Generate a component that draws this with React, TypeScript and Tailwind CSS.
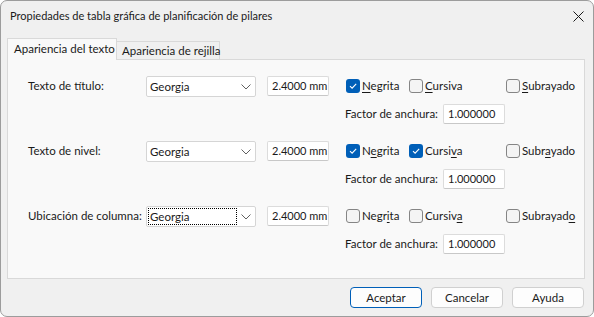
import React from "react"

type Mn = { text: string; u: number }

function Mnemonic({ text, u }: Mn) {
  return (
    <span className="whitespace-nowrap">
      {text.slice(0, u)}
      <span className="underline underline-offset-[2px]">{text.charAt(u)}</span>
      {text.slice(u + 1)}
    </span>
  )
}

function Check({ checked, label }: { checked: boolean; label: Mn }) {
  return (
    <div className="flex items-center gap-[2px]">
      {checked ? (
        <div className="w-[14px] h-[14px] rounded-[3px] bg-[#005fb8] flex items-center justify-center">
          <svg width="10" height="10" viewBox="0 0 10 10">
            <path d="M2 5.2 L4.1 7.2 L8.2 2.8" fill="none" stroke="white" strokeWidth="1.1" />
          </svg>
        </div>
      ) : (
        <div className="w-[14px] h-[14px] rounded-[3px] border border-[#858585] bg-[#f4f4f4]" />
      )}
      <Mnemonic {...label} />
    </div>
  )
}

function Combo({ focused }: { focused?: boolean }) {
  return (
    <div className="w-[110px] h-[21px] bg-white border border-[#d5d5d5] rounded-[2px] flex items-center pl-[1px] pr-[4px] justify-between">
      <div className={`h-[17px] w-[89px] flex items-center pl-[1px] ${focused ? "border border-dotted border-black" : "border border-transparent"}`}>
        Georgia
      </div>
      <svg width="10" height="6" viewBox="0 0 10 6">
        <path d="M0.5 0.5 L5 5 L9.5 0.5" fill="none" stroke="#606060" strokeWidth="1" />
      </svg>
    </div>
  )
}

function Field({ value, w }: { value: string; w: string }) {
  return (
    <div className={`${w} h-[20px] bg-white border border-[#dcdcdc] border-b-[#c8c8c8] rounded-[2px] flex items-center pl-[4px] whitespace-nowrap text-[11px]`}>
      {value}
    </div>
  )
}

const rows = [
  { label: "Texto de título:", n: true, c: false, marks: [0, 0, 0] },
  { label: "Texto de nivel:", n: true, c: true, marks: [1, 5, 4] },
  { label: "Ubicación de columna:", n: false, c: false, marks: [4, 6, 8] },
]

function Row({ r, idx }: { r: (typeof rows)[number]; idx: number }) {
  return (
    <div className="flex flex-col">
      <div className="flex items-start h-[21px]">
        <div className="w-[118px] pt-[1px] whitespace-nowrap">{r.label}</div>
        <Combo focused={idx === 2} />
        <div className="w-[11px]" />
        <Field value="2.4000 mm" w="w-[62px]" />
        <div className="w-[17px]" />
        <div className="flex items-center h-[20px] w-[160px]">
          <div className="w-[63px]">
            <Check checked={r.n} label={{ text: "Negrita", u: r.marks[0] }} />
          </div>
          <Check checked={r.c} label={{ text: "Cursiva", u: r.marks[1] }} />
        </div>
        <div className="flex items-center h-[20px]">
          <Check checked={false} label={{ text: "Subrayado", u: r.marks[2] }} />
        </div>
      </div>
      <div className="flex items-center h-[20px] mt-[7px] pl-[317px]">
        <div className="w-[98px] whitespace-nowrap">Factor de anchura:</div>
        <Field value="1.000000" w="w-[62px]" />
      </div>
    </div>
  )
}

function Button({ label, primary }: { label: string; primary?: boolean }) {
  return (
    <div
      className={`w-[72px] h-[21px] rounded-[4px] bg-[#fdfdfd] flex items-center justify-center border ${
        primary ? "border-[#005fb8]" : "border-[#d0d0d0]"
      }`}
    >
      {label}
    </div>
  )
}

export default function App() {
  return (
    <div
      className="w-[594px] h-[317px] bg-[#f0f0f0] border border-[#9c9c9c] rounded-[7px] flex flex-col text-[11.5px] text-[#1a1a1a] overflow-hidden"
      style={{ fontFamily: 'Lato, "Noto Sans", sans-serif' }}
    >
      <div className="h-[30px] flex items-center justify-between pl-[9px] pr-[9px]">
        <span className="text-[11px] whitespace-nowrap">Propiedades de tabla gráfica de planificación de pilares</span>
        <svg width="11" height="11" viewBox="0 0 11 11">
          <path d="M0.5 0.5 L10.5 10.5 M10.5 0.5 L0.5 10.5" stroke="#1a1a1a" strokeWidth="1" />
        </svg>
      </div>
      <div className="flex flex-col pl-[6px] pr-[8px] pt-[6px]">
        <div className="flex items-end h-[22px]">
          <div className="h-[22px] w-[110px] px-[6px] flex items-center bg-[#f9f9f9] border border-b-0 border-[#d9d9d9] relative z-10 -mb-px pb-[1px] whitespace-nowrap">
            Apariencia del texto
          </div>
          <div className="h-[18px] w-[103px] px-[5px] flex items-center bg-[#f0f0f0] border border-l-0 border-b-0 border-[#d9d9d9] whitespace-nowrap">
            Apariencia de rejilla
          </div>
        </div>
        <div className="h-[220px] bg-[#f9f9f9] border border-[#d9d9d9] pl-[20px] pt-[16px] flex flex-col gap-[17px]">
          {rows.map((r, i) => (
            <Row key={i} r={r} idx={i} />
          ))}
        </div>
      </div>
      <div className="flex justify-end gap-[9px] pr-[9px] pt-[8px]">
        <Button label="Aceptar" primary />
        <Button label="Cancelar" />
        <Button label="Ayuda" />
      </div>
    </div>
  )
}
